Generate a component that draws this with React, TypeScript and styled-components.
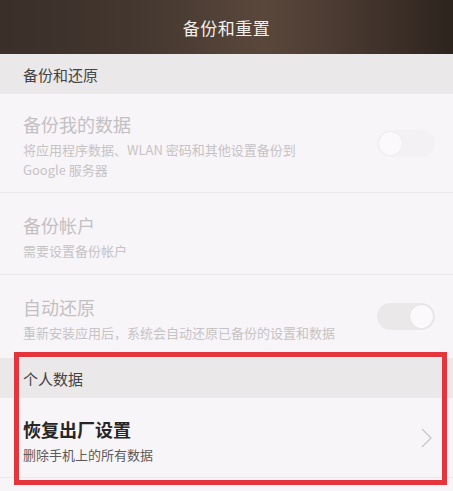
import styled, { createGlobalStyle } from 'styled-components';

const GlobalStyle = createGlobalStyle`
  html, body {
    margin: 0;
    padding: 0;
    background: #f8f5f8;
  }
  body {
    font-family: 'Noto Sans CJK SC', 'Noto Sans', sans-serif;
  }
`;

interface ToggleProps {
  on?: boolean;
}

export default function App() {
  return (
    <>
      <GlobalStyle />
      <Page>
        <Header>备份和重置</Header>

        <SectionHeader>备份和还原</SectionHeader>
        <Item height={99}>
          <ItemText>
            <Title>备份我的数据</Title>
            <Subtitle>
              将应用程序数据、WLAN 密码和其他设置备份到
              <br />
              Google 服务器
            </Subtitle>
          </ItemText>
          <Toggle />
        </Item>
        <Item height={82}>
          <ItemText>
            <Title>备份帐户</Title>
            <Subtitle>需要设置备份帐户</Subtitle>
          </ItemText>
        </Item>
        <Item height={82} last>
          <ItemText>
            <Title>自动还原</Title>
            <Subtitle>重新安装应用后，系统会自动还原已备份的设置和数据</Subtitle>
          </ItemText>
          <Toggle on />
        </Item>

        <Highlighted>
          <SectionHeader>个人数据</SectionHeader>
          <Item height={80}>
            <ItemText>
              <Title active>恢复出厂设置</Title>
              <Subtitle active>删除手机上的所有数据</Subtitle>
            </ItemText>
            <Chevron width="12" height="20" viewBox="0 0 12 20">
              <polyline points="1,1 10,10 1,19" />
            </Chevron>
          </Item>
        </Highlighted>
      </Page>
    </>
  );
}

const Page = styled.div`
  width: 453px;
  height: 491px;
  overflow: hidden;
  background: #f8f5f8;
  display: flex;
  flex-direction: column;
`;

const Header = styled.div`
  height: 54px;
  flex-shrink: 0;
  display: flex;
  align-items: center;
  justify-content: center;
  background: linear-gradient(
    90deg,
    #3a2f29 0%,
    #43372f 30%,
    #5a473c 58%,
    #4a3a31 75%,
    #2d241e 100%
  );
  color: #f3efeb;
  font-size: 17px;
  letter-spacing: 0.5px;
`;

const SectionHeader = styled.div`
  height: 40px;
  flex-shrink: 0;
  display: flex;
  align-items: center;
  padding-left: 23px;
  background: #ebe8ea;
  color: #444;
  font-size: 15px;
`;

const Item = styled.div<{ height: number; last?: boolean }>`
  height: ${(p) => p.height}px;
  flex-shrink: 0;
  box-sizing: border-box;
  display: flex;
  align-items: center;
  justify-content: space-between;
  padding: 6px 18px 0 23px;
  border-bottom: ${(p) => (p.last ? 'none' : '1px solid #ebe8ea')};
`;

const ItemText = styled.div`
  display: flex;
  flex-direction: column;
  gap: 4px;
`;

const Title = styled.div<{ active?: boolean }>`
  font-size: 18px;
  line-height: 24px;
  font-weight: ${(p) => (p.active ? 700 : 400)};
  color: ${(p) => (p.active ? '#262626' : '#c3c0c2')};
`;

const Subtitle = styled.div<{ active?: boolean }>`
  font-size: 13px;
  line-height: 20px;
  color: ${(p) => (p.active ? '#5a5a5a' : '#c6c3c5')};
`;

const Toggle = styled.div<ToggleProps>`
  position: relative;
  width: 58px;
  height: 27px;
  margin-top: -6px;
  border-radius: 14px;
  flex-shrink: 0;
  background: ${(p) => (p.on ? '#ebe8ea' : '#f4f1f4')};

  &::after {
    content: '';
    position: absolute;
    top: 2px;
    left: ${(p) => (p.on ? '33px' : '2px')};
    width: 23px;
    height: 23px;
    border-radius: 50%;
    background: #fbf9fb;
    box-shadow: 0 0 1px rgba(0, 0, 0, 0.12);
  }
`;

const Chevron = styled.svg`
  margin-right: 2px;
  margin-top: -6px;
  fill: none;
  stroke: #c8c6c8;
  stroke-width: 1.3;
`;

const Highlighted = styled.div`
  position: relative;
  margin-top: 1px;
  display: flex;
  flex-direction: column;

  &::after {
    content: '';
    position: absolute;
    top: -6px;
    left: 14px;
    right: 6px;
    bottom: -7px;
    border: 5px solid #e5343b;
    pointer-events: none;
  }
`;
